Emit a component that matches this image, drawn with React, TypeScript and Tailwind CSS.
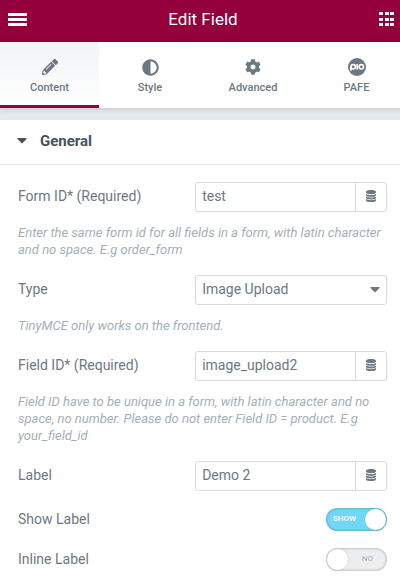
import { useState } from "react";
import type { ReactNode } from "react";
import { FaAdjust, FaCog, FaPencilAlt } from "react-icons/fa";

function PafeIcon() {
  return (
    <svg viewBox="0 0 18 18" className="size-[18px]" fill="none" aria-hidden>
      <circle cx="9" cy="9" r="9" fill="#6d7882" />
      <g stroke="#fff" strokeWidth="1.6">
        <path d="M2.9 12.8V8.8" />
        <circle cx="5.2" cy="8.8" r="2.2" />
        <path d="M9.2 6v5.6" />
        <circle cx="13.3" cy="8.8" r="2.2" />
      </g>
    </svg>
  );
}

function DatabaseIcon() {
  return (
    <svg viewBox="0 0 10 12" className="h-[12px] w-[10px]" fill="currentColor" aria-hidden>
      <path d="M0 1.600C0 .7 2.200 0 5 0s5 .7 5 1.600v1C10 3.500 7.800 4.200 5 4.200S0 3.500 0 2.600z" />
      <path d="M0 3.900c1 .7 2.900 1.100 5 1.100s4-.4 5-1.100v1.300C10 6.100 7.800 6.800 5 6.800S0 6.100 0 5.200z" />
      <path d="M0 6.500c1 .7 2.900 1.100 5 1.100s4-.4 5-1.100v1.300c0 .9-2.200 1.600-5 1.600S0 8.700 0 7.800z" />
      <path d="M0 9.100c1 .7 2.900 1.100 5 1.100s4-.4 5-1.100v1.300c0 .9-2.200 1.600-5 1.600s-5-.7-5-1.600z" />
    </svg>
  );
}

const tabs = [
  { label: "Content", icon: <FaPencilAlt className="size-4" /> },
  { label: "Style", icon: <FaAdjust className="size-[17px]" /> },
  { label: "Advanced", icon: <FaCog className="size-4" /> },
  { label: "PAFE", icon: <PafeIcon /> },
];

function Caret({ className }: { className: string }) {
  return (
    <svg viewBox="0 0 10 6" className={className} fill="currentColor" aria-hidden>
      <path d="M.8 0h8.4q.8.2.3.9L5.6 5.1q-.6.5-1.2 0L.5.9Q0 .2.8 0z" />
    </svg>
  );
}

function Row({ id, label, children }: { id: string; label: string; children: ReactNode }) {
  return (
    <div className="flex items-center justify-between">
      <label htmlFor={id} className="pb-0.5 text-sm">
        {label}
      </label>
      {children}
    </div>
  );
}

function Hint({ children }: { children: ReactNode }) {
  return <p className="mt-3 text-[13px] leading-[17px] text-[#a4afb7] italic">{children}</p>;
}

function TextField({ id, label, value, hint }: { id: string; label: string; value: string; hint?: string }) {
  return (
    <div>
      <Row id={id} label={label}>
        <div className="flex h-[30px] w-[52%] rounded-[3px] border border-[#d5dadf]">
          <input id={id} defaultValue={value} className="min-w-0 flex-1 px-1.5 pb-0.5 text-sm outline-none" />
          <button
            type="button"
            aria-label="Dynamic tags"
            className="flex w-[31px] items-center justify-center border-l border-[#d5dadf] pb-0.5"
          >
            <DatabaseIcon />
          </button>
        </div>
      </Row>
      {hint && <Hint>{hint}</Hint>}
    </div>
  );
}

function Toggle({ id, label, on = false }: { id: string; label: string; on?: boolean }) {
  const [checked, setChecked] = useState(on);

  return (
    <Row id={id} label={label}>
      <label className="relative flex h-[23px] w-[61px] cursor-pointer items-center rounded-full bg-[#ebedee] px-[7px] text-[8px] text-[#a4afb7] uppercase shadow-[inset_0_0_3px_rgba(0,0,0,0.35)] has-checked:bg-[#71d7f7] has-checked:font-medium has-checked:text-white">
        <input
          id={id}
          type="checkbox"
          checked={checked}
          onChange={(e) => setChecked(e.target.checked)}
          className="peer absolute inset-0 cursor-pointer opacity-0"
        />
        <span className="w-full pr-[7px] pb-px text-right peer-checked:pr-0 peer-checked:text-left">
          {checked ? "Show" : "No"}
        </span>
        <span className="pointer-events-none absolute top-px left-px size-[21px] rounded-full bg-white shadow-[0_0_2px_rgba(0,0,0,0.15)] peer-checked:right-px peer-checked:left-auto" />
      </label>
    </Row>
  );
}

export default function App() {
  const [active, setActive] = useState("Content");

  return (
    <div className="min-h-screen overflow-x-clip bg-white font-['Roboto',sans-serif] text-[#6d7882]">
      <header className="flex h-[42px] items-center justify-between bg-[#93003c] pr-1.5 pb-1 pl-2 text-white">
        <button type="button" aria-label="Menu">
          <svg viewBox="0 0 19 13" className="h-[13px] w-[19px]" fill="currentColor" aria-hidden>
            <path d="M0 0h19v3H0zM0 5h19v3H0zM0 10h19v3H0z" />
          </svg>
        </button>
        <h1 className="text-[17px] leading-6">Edit Field</h1>
        <button type="button" aria-label="Widgets">
          <svg viewBox="0 0 15 14" className="h-[14px] w-[15px]" fill="currentColor" aria-hidden>
            <path d="M0 0h4v3H0zM6 0h4v3H6zM11 0h4v3h-4zM0 6h4v3H0zM6 6h4v3H6zM11 6h4v3h-4zM0 11h4v3H0zM6 11h4v3H6zM11 11h4v3h-4z" />
          </svg>
        </button>
      </header>

      <nav className="relative grid h-[66px] w-[102%] grid-cols-[99fr_102fr_104fr_103fr] shadow-[0_1px_6px_rgba(0,0,0,0.15)]">
        {tabs.map((tab) => (
          <button
            key={tab.label}
            type="button"
            aria-pressed={active === tab.label}
            onClick={() => setActive(tab.label)}
            className="flex flex-col items-center border-b-[3px] border-transparent pt-4 text-[11px] leading-4 font-medium aria-pressed:border-[#93003c] aria-pressed:bg-linear-to-b aria-pressed:from-[#f1f3f5] aria-pressed:to-white"
          >
            <span className="mb-1 flex h-[18px] items-center">{tab.icon}</span>
            {tab.label}
          </button>
        ))}
      </nav>

      <main className="border-t-12 border-[#e6e9ec]">
        <button
          type="button"
          aria-expanded="true"
          className="flex h-[45px] w-full items-center border-b border-[#e6e9ec] px-[17px] pb-0.5 text-[15px] font-bold text-[#495157]"
        >
          <Caret className="mr-[13px] h-[6px] w-[10px]" />
          General
        </button>

        <form className="flex flex-col gap-[17px] py-[17px] pr-[13px] pl-[18px]">
          <TextField
            id="form-id"
            label="Form ID* (Required)"
            value="test"
            hint="Enter the same form id for all fields in a form, with latin character and no space. E.g order_form"
          />
          <div>
            <Row id="type" label="Type">
              <div className="relative w-[52%]">
                <select
                  id="type"
                  className="h-[30px] w-full appearance-none rounded-[3px] border border-[#d5dadf] bg-white px-1.5 pb-0.5 text-sm outline-none"
                >
                  <option>Image Upload</option>
                </select>
                <Caret className="pointer-events-none absolute top-3 right-[7px] h-[6px] w-[10px]" />
              </div>
            </Row>
            <Hint>TinyMCE only works on the frontend.</Hint>
          </div>
          <TextField
            id="field-id"
            label="Field ID* (Required)"
            value="image_upload2"
            hint="Field ID have to be unique in a form, with latin character and no space, no number. Please do not enter Field ID = product. E.g your_field_id"
          />
          <TextField id="label" label="Label" value="Demo 2" />
          <Toggle id="show-label" label="Show Label" on />
          <Toggle id="inline-label" label="Inline Label" />
        </form>
      </main>
    </div>
  );
}
